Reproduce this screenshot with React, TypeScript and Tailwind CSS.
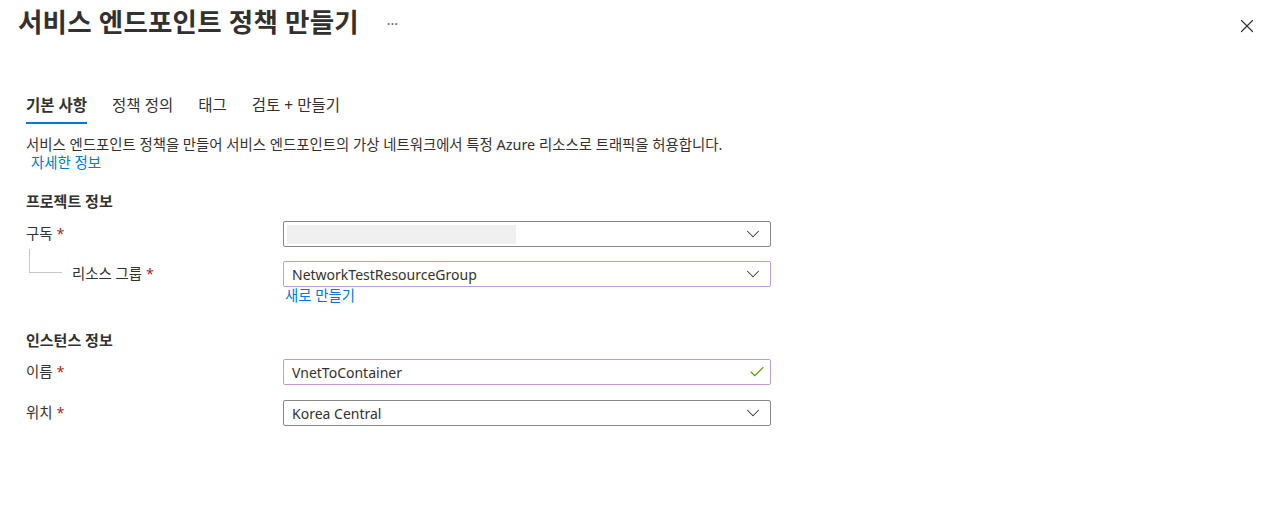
import { X, ChevronDown, Check } from "lucide-react";

const font = {
  fontFamily: '"Noto Sans", "Noto Sans CJK KR", sans-serif',
};

function Req() {
  return <span className="ml-1 text-[#a4262c]">*</span>;
}

function Select({
  value,
  purple,
  blank,
}: {
  value?: string;
  purple?: boolean;
  blank?: boolean;
}) {
  return (
    <div
      className={`flex h-[26px] w-[488px] items-center rounded-[2px] border pl-[8px] pr-[6px] ${
        purple ? "border-[#c49ad6]" : "border-[#8a8886]"
      }`}
    >
      {blank ? (
        <div className="-ml-[5px] h-[19px] w-[229px] bg-[#f0f0f0]" />
      ) : (
        <span className="text-[14px] text-[#323130]">{value}</span>
      )}
      <ChevronDown className="ml-auto h-[22px] w-[22px] text-[#323130]" strokeWidth={1.1} />
    </div>
  );
}

export default function App() {
  return (
    <div style={font} className="h-[526px] w-[1280px] bg-white text-[#323130]">
      {/* Header */}
      <div className="flex items-start pl-[18px] pr-[22px] pt-[3px]">
        <h1 className="text-[26.5px] font-bold leading-[38px] tracking-[0.2px]">
          서비스 엔드포인트 정책 만들기
        </h1>
        <span className="ml-[28px] mt-[10px] text-[14px] text-[#605e5c]">···</span>
        <X className="ml-auto mt-[12px] h-[22px] w-[22px] text-[#323130]" strokeWidth={1.3} />
      </div>

      <div className="px-[26px] pt-[53px]">
        {/* Tabs */}
        <div className="flex gap-[25px] text-[15.5px]">
          <div className="flex flex-col">
            <span className="font-semibold leading-[22px]">기본 사항</span>
            <div className="mt-[6px] h-[2px] bg-[#0078d4]" />
          </div>
          <span className="leading-[22px]">정책 정의</span>
          <span className="leading-[22px]">태그</span>
          <span className="leading-[22px]">검토 + 만들기</span>
        </div>

        {/* Description */}
        <p className="mt-[12px] text-[14.4px] leading-[18px]">
          서비스 엔드포인트 정책을 만들어 서비스 엔드포인트의 가상 네트워크에서 특정 Azure 리소스로 트래픽을 허용합니다.
        </p>
        <a className="ml-[5px] block text-[14.4px] leading-[18px] text-[#0078d4]">자세한 정보</a>

        {/* Project details */}
        <h2 className="mt-[19px] text-[15px] font-semibold leading-[20px]">프로젝트 정보</h2>

        <div className="mt-[10px] flex items-center">
          <div className="w-[257px] text-[14.4px]">
            구독<Req />
          </div>
          <Select blank />
        </div>

        <div className="mt-[14px] flex items-start">
          <div className="flex w-[257px]">
            <div className="-mt-[12px] ml-[3px] h-[24px] w-[33px] border-b border-l border-[#c8c6c4]" />
            <span className="ml-[10px] mt-[2px] text-[14.4px]">
              리소스 그룹<Req />
            </span>
          </div>
          <div className="flex flex-col">
            <Select value="NetworkTestResourceGroup" purple />
            <a className="ml-[2px] text-[14.4px] leading-[18px] text-[#0078d4]">새로 만들기</a>
          </div>
        </div>

        {/* Instance details */}
        <h2 className="mt-[25px] text-[15px] font-semibold leading-[20px]">인스턴스 정보</h2>

        <div className="mt-[9px] flex items-center">
          <div className="w-[257px] text-[14.4px]">
            이름<Req />
          </div>
          <div className="flex h-[26px] w-[488px] items-center rounded-[2px] border border-[#c49ad6] pl-[8px] pr-[4px]">
            <span className="text-[14px]">VnetToContainer</span>
            <Check className="ml-auto h-[18px] w-[18px] text-[#57a300]" strokeWidth={1.5} />
          </div>
        </div>

        <div className="mt-[15px] flex items-center">
          <div className="w-[257px] text-[14.4px]">
            위치<Req />
          </div>
          <Select value="Korea Central" />
        </div>
      </div>
    </div>
  );
}
